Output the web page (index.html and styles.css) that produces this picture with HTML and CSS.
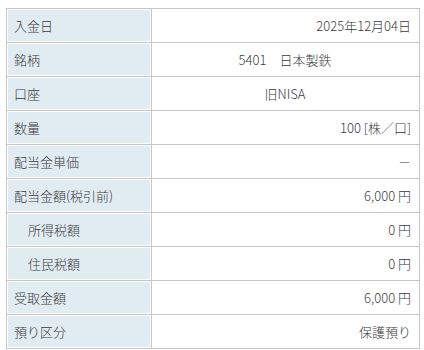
FILE: index.html
```html
<!DOCTYPE html>
<html lang="ja">
<head>
<meta charset="utf-8">
<link rel="stylesheet" href="styles.css">
</head>
<body>
<table class="detail">
  <tr><th>入金日</th><td class="r">2025年12月04日</td></tr>
  <tr><th>銘柄</th><td class="c">5401　日本製鉄</td></tr>
  <tr><th>口座</th><td class="c">旧NISA</td></tr>
  <tr><th>数量</th><td class="r">100 [株／口]</td></tr>
  <tr><th>配当金単価</th><td class="r">－</td></tr>
  <tr><th>配当金額(税引前)</th><td class="r">6,000 円</td></tr>
  <tr><th class="indent">所得税額</th><td class="r">0 円</td></tr>
  <tr><th class="indent">住民税額</th><td class="r">0 円</td></tr>
  <tr><th>受取金額</th><td class="r">6,000 円</td></tr>
  <tr><th>預り区分</th><td class="r">保護預り</td></tr>
</table>
</body>
</html>
```
FILE: styles.css
```css
html, body {
  margin: 0;
  background: #fff;
}
body {
  padding: 8px 0 0 6px;
  font-family: "Noto Sans CJK JP", "Noto Sans", sans-serif;
  font-size: 13px;
  font-weight: 300;
  color: #3a3a3a;
}
.detail {
  border-collapse: collapse;
  width: 414px;
}
.detail th, .detail td {
  border: 1px solid #c6c6c6;
  height: 34px;
  box-sizing: border-box;
  padding: 0 8px 0 7px;
  font-weight: 300;
  line-height: 1;
}
.detail th {
  width: 145px;
  text-align: left;
  background: #e1ebf2;
  box-shadow: inset 0 0 0 1px #fff;
}
.detail th.indent {
  padding-left: 21px;
}
.detail td.r { text-align: right; }
.detail td.c { text-align: center; }
```
